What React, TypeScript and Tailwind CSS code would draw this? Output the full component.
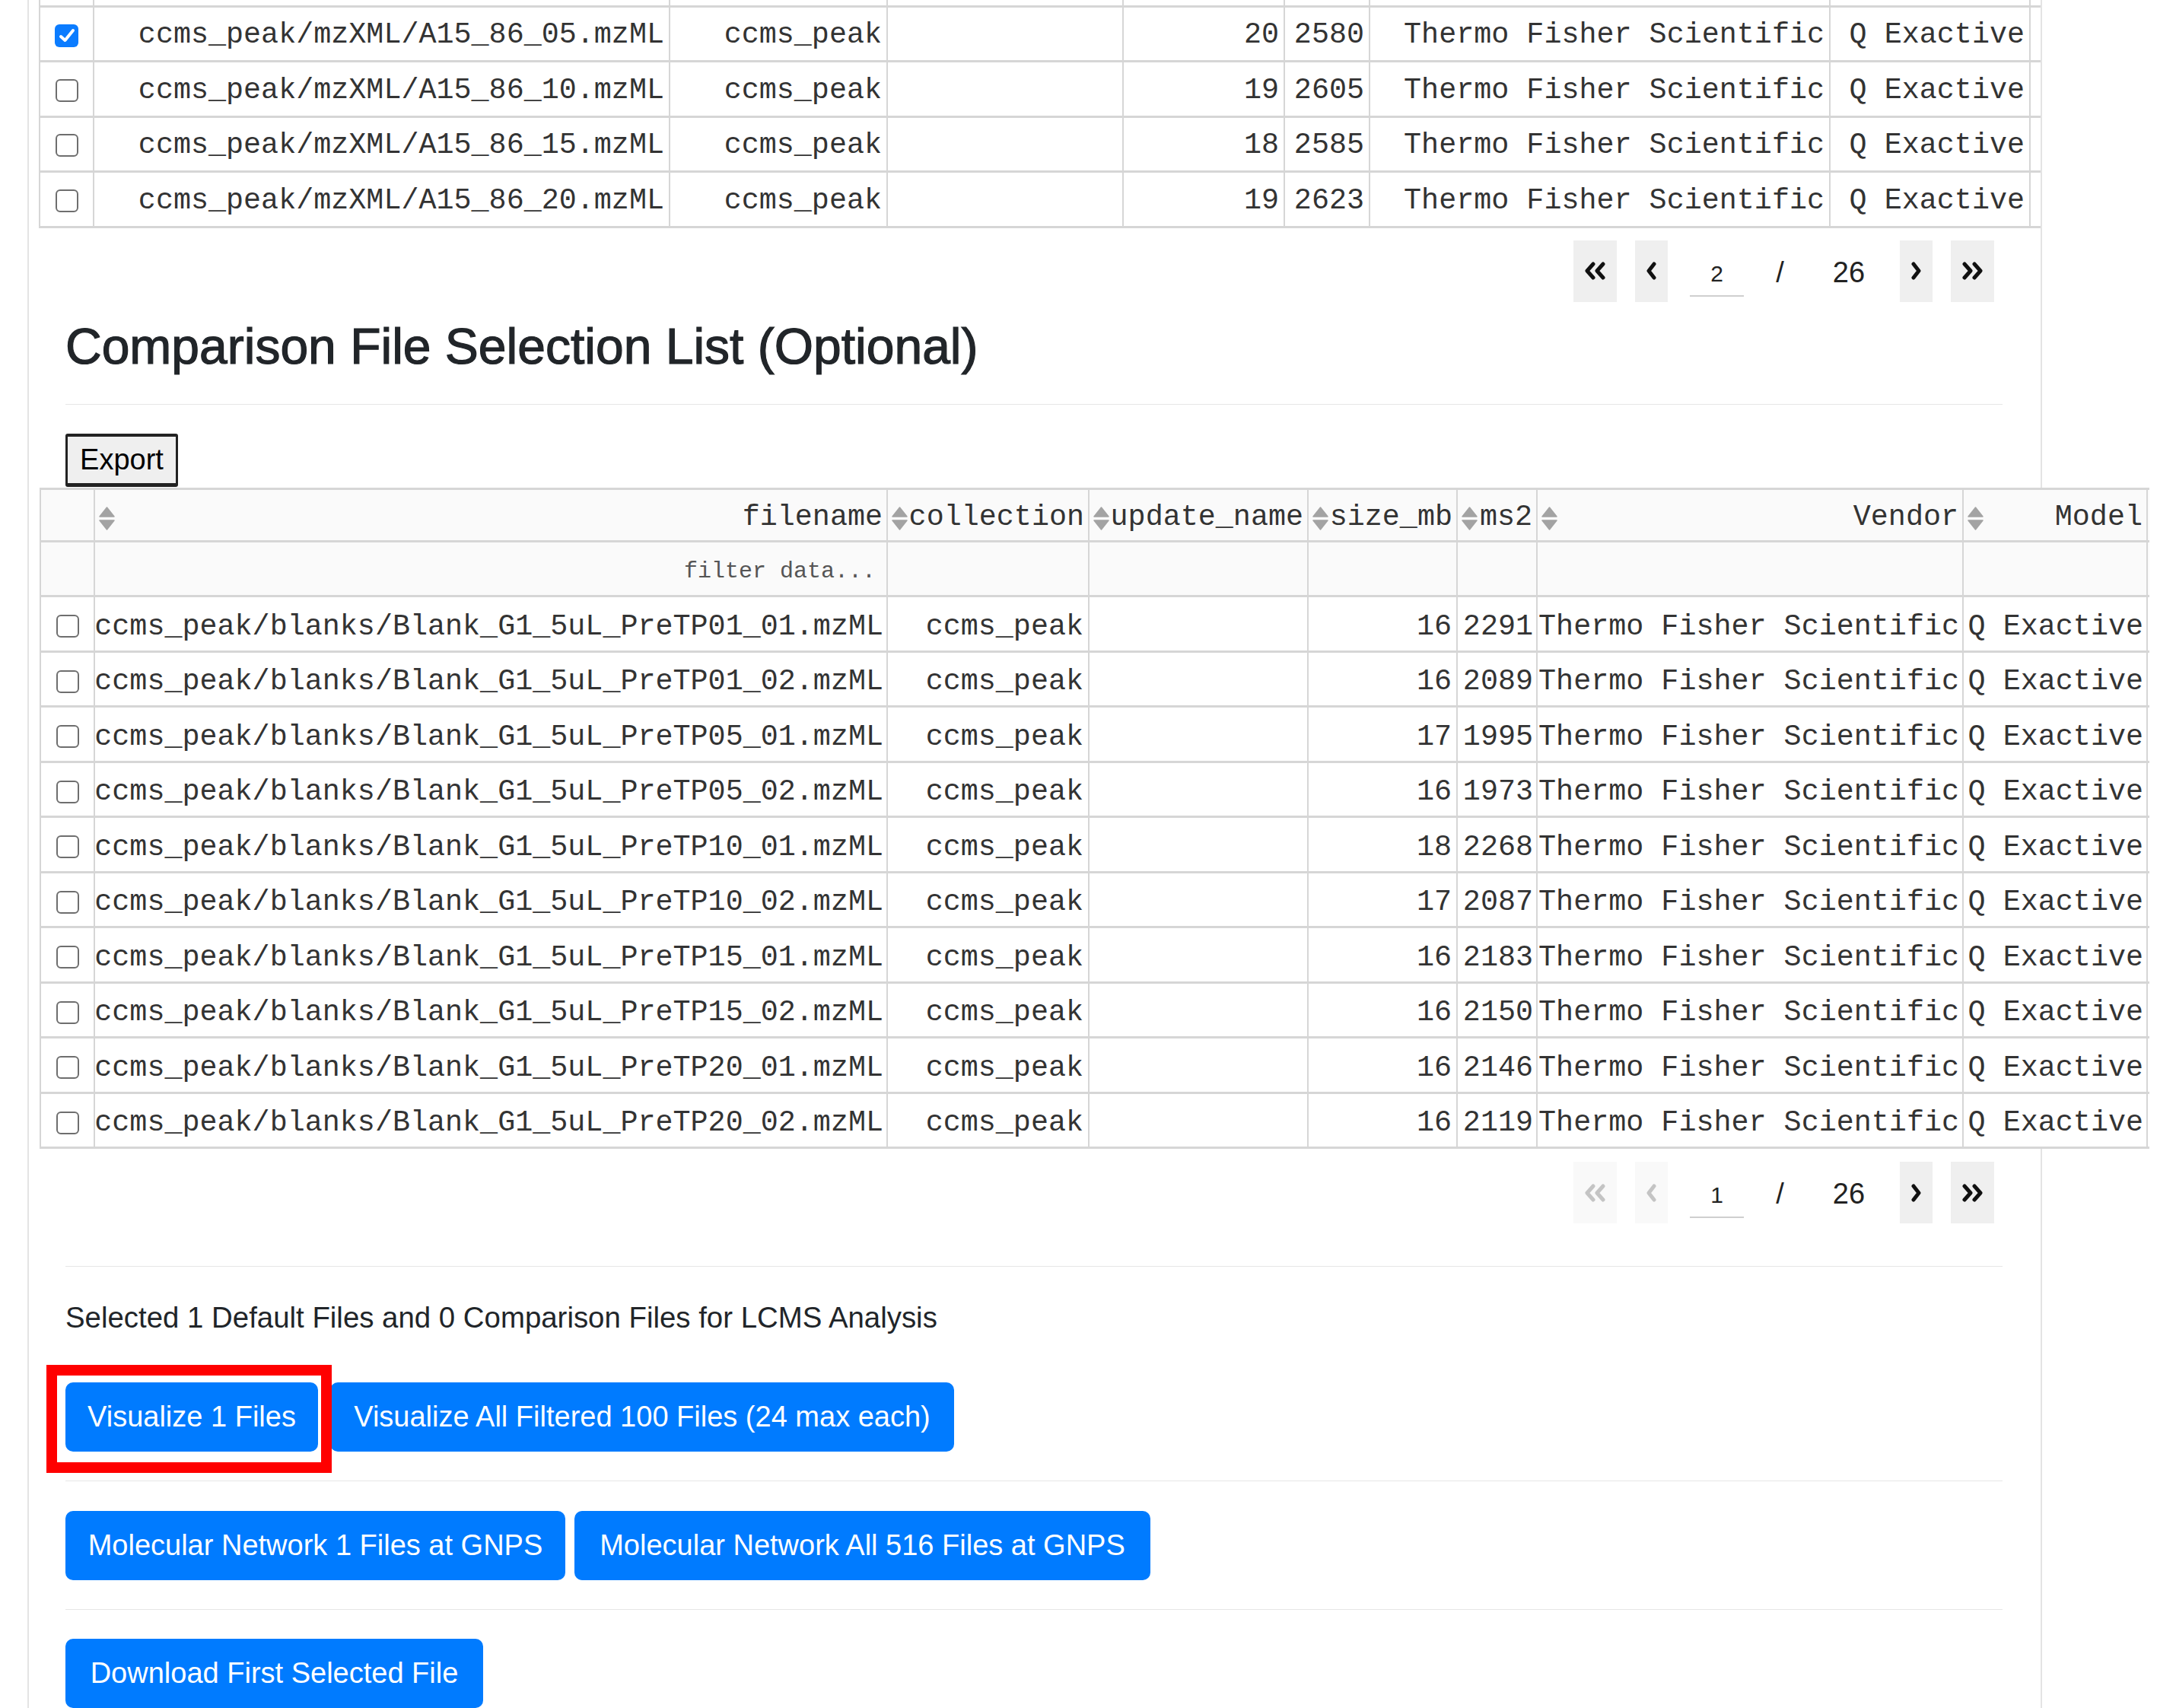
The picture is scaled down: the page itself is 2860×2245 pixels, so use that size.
import React from "react";

const MONO = "font-['Liberation_Mono',monospace]";
const SANS = "font-['Liberation_Sans',Arial,sans-serif]";

const topCols = [71, 757, 286, 310, 212, 112, 605, 263];
const botCols = [71, 1042, 265, 288, 196, 105, 560, 242];

const topRows = [
  { f: "ccms_peak/mzXML/A15_86_05.mzML", s: "20", m: "2580", c: true },
  { f: "ccms_peak/mzXML/A15_86_10.mzML", s: "19", m: "2605", c: false },
  { f: "ccms_peak/mzXML/A15_86_15.mzML", s: "18", m: "2585", c: false },
  { f: "ccms_peak/mzXML/A15_86_20.mzML", s: "19", m: "2623", c: false },
];

const botRows = [
  { f: "ccms_peak/blanks/Blank_G1_5uL_PreTP01_01.mzML", s: "16", m: "2291" },
  { f: "ccms_peak/blanks/Blank_G1_5uL_PreTP01_02.mzML", s: "16", m: "2089" },
  { f: "ccms_peak/blanks/Blank_G1_5uL_PreTP05_01.mzML", s: "17", m: "1995" },
  { f: "ccms_peak/blanks/Blank_G1_5uL_PreTP05_02.mzML", s: "16", m: "1973" },
  { f: "ccms_peak/blanks/Blank_G1_5uL_PreTP10_01.mzML", s: "18", m: "2268" },
  { f: "ccms_peak/blanks/Blank_G1_5uL_PreTP10_02.mzML", s: "17", m: "2087" },
  { f: "ccms_peak/blanks/Blank_G1_5uL_PreTP15_01.mzML", s: "16", m: "2183" },
  { f: "ccms_peak/blanks/Blank_G1_5uL_PreTP15_02.mzML", s: "16", m: "2150" },
  { f: "ccms_peak/blanks/Blank_G1_5uL_PreTP20_01.mzML", s: "16", m: "2146" },
  { f: "ccms_peak/blanks/Blank_G1_5uL_PreTP20_02.mzML", s: "16", m: "2119" },
];

function CheckBox({ checked, low }: { checked?: boolean; low?: boolean }) {
  const mt = low ? "mt-[7px]" : "mt-[4px]";
  if (checked) {
    return (
      <div className={`${mt} w-[31px] h-[30px] rounded-[6px] bg-[#0b7cff] flex items-center justify-center`}>
        <svg width="22" height="20" viewBox="0 0 22 20">
          <polyline points="3,11 8.5,16 19,3" fill="none" stroke="#fff" strokeWidth="4" strokeLinecap="round" strokeLinejoin="round" />
        </svg>
      </div>
    );
  }
  return <div className={`${mt} w-[30px] h-[30px] rounded-[6px] border-2 border-[#6e6e6e] bg-white`} />;
}

function SortIcon() {
  return (
    <svg width="23" height="31" viewBox="0 0 23 31" className="shrink-0">
      <path d="M11.5 1 L21 13 L2 13 Z" fill="#a3a3a3" stroke="#a3a3a3" strokeWidth="1.5" strokeLinejoin="round" />
      <path d="M2 18 L21 18 L11.5 30 Z" fill="#a3a3a3" stroke="#a3a3a3" strokeWidth="1.5" strokeLinejoin="round" />
    </svg>
  );
}

function Cell({ w, children, center, className = "" }: { w: number; children?: React.ReactNode; center?: boolean; className?: string }) {
  return (
    <div
      style={{ width: w }}
      className={`shrink-0 h-full border-r-2 border-[#d6d6d6] flex items-center ${center ? "justify-center" : "justify-end pr-[6px] pt-[5px]"} overflow-hidden whitespace-nowrap ${className}`}
    >
      {children}
    </div>
  );
}

function Chevron({ dir, double, color }: { dir: "l" | "r"; double?: boolean; color: string }) {
  const single = dir === "l" ? "11,3 4,12 11,21" : "4,3 11,12 4,21";
  if (!double) {
    return (
      <svg width="15" height="24" viewBox="0 0 15 24">
        <polyline points={single} fill="none" stroke={color} strokeWidth="5" strokeLinecap="round" strokeLinejoin="round" />
      </svg>
    );
  }
  const a = dir === "l" ? "13,3 5,12 13,21" : "5,3 13,12 5,21";
  const b = dir === "l" ? "26,3 18,12 26,21" : "18,3 26,12 18,21";
  return (
    <svg width="31" height="24" viewBox="0 0 31 24">
      <polyline points={a} fill="none" stroke={color} strokeWidth="5" strokeLinecap="round" strokeLinejoin="round" />
      <polyline points={b} fill="none" stroke={color} strokeWidth="5" strokeLinecap="round" strokeLinejoin="round" />
    </svg>
  );
}

function Pagination({ page, firstDisabled }: { page: string; firstDisabled?: boolean }) {
  const lBg = firstDisabled ? "bg-[#f9f9f9]" : "bg-[#efefef]";
  const lCol = firstDisabled ? "#c4c4c4" : "#111111";
  return (
    <div className="flex h-[81px] items-stretch justify-end pr-[61px]">
      <div className={`w-[57px] ${lBg} flex items-center justify-center`}>
        <Chevron dir="l" double color={lCol} />
      </div>
      <div className={`w-[43px] ml-[24px] ${lBg} flex items-center justify-center`}>
        <Chevron dir="l" color={lCol} />
      </div>
      <div className="w-[71px] ml-[29px] relative flex items-center justify-center">
        <span className={`${SANS} text-[30px] text-[#222] mt-[6px]`}>{page}</span>
        <div className="absolute left-0 right-0 bottom-[7px] h-[2px] bg-[#cfcfcf]" />
      </div>
      <div className={`w-[95px] flex items-center justify-center ${SANS} text-[38px] text-[#222] pt-[4px]`}>/</div>
      <div className={`w-[86px] flex items-center justify-center ${SANS} text-[38px] text-[#222] pt-[4px]`}>26</div>
      <div className="w-[43px] ml-[24px] bg-[#efefef] flex items-center justify-center">
        <Chevron dir="r" color="#111111" />
      </div>
      <div className="w-[57px] ml-[24px] bg-[#efefef] flex items-center justify-center">
        <Chevron dir="r" double color="#111111" />
      </div>
    </div>
  );
}

function Hr({ className = "" }: { className?: string }) {
  return <div className={`ml-[48px] mr-[50px] h-[2px] bg-[#e6e6e6] ${className}`} />;
}

function BlueButton({ w, children, className = "" }: { w: number; children: React.ReactNode; className?: string }) {
  return (
    <div
      style={{ width: w }}
      className={`h-[91px] shrink-0 rounded-[10px] bg-[#007bff] text-white ${SANS} text-[38px] flex items-center justify-center whitespace-nowrap ${className}`}
    >
      {children}
    </div>
  );
}

export default function App() {
  return (
    <div className="relative w-[2860px] h-[2245px] overflow-hidden bg-white text-[#212529]">
      <div className="flex h-full">
        <div className="w-[36px] shrink-0" />
        <div className="w-[2648px] shrink-0 h-full border-x-2 border-[#e4e4e4] flex flex-col">
          {/* top table (continuation) */}
          <div className={`ml-[13px] border-l-2 border-[#d6d6d6] ${MONO} text-[38.4px] text-[#333]`}>
            <div className="flex h-[10px] border-b-[3px] border-[#d6d6d6]">
              {topCols.map((w, i) => (
                <Cell key={i} w={w} center />
              ))}
            </div>
            {topRows.map((r, i) => (
              <div key={i} className="flex h-[72.4px] border-b-[3px] border-[#d6d6d6]">
                <Cell w={topCols[0]} center>
                  <CheckBox checked={r.c} />
                </Cell>
                <Cell w={topCols[1]}>{r.f}</Cell>
                <Cell w={topCols[2]}>ccms_peak</Cell>
                <Cell w={topCols[3]} />
                <Cell w={topCols[4]}>{r.s}</Cell>
                <Cell w={topCols[5]}>{r.m}</Cell>
                <Cell w={topCols[6]}>Thermo Fisher Scientific</Cell>
                <Cell w={topCols[7]}>Q Exactive</Cell>
              </div>
            ))}
          </div>

          <div className="mt-[16.4px]">
            <Pagination page="2" />
          </div>

          <h3 className={`mt-[18px] ml-[48px] h-[80px] leading-[80px] text-[66px] ${SANS} [-webkit-text-stroke:1.2px_#212529] whitespace-nowrap`}>
            Comparison File Selection List (Optional)
          </h3>

          <Hr className="mt-[36px]" />

          <div className="mt-[39px] ml-[48px]">
            <div className={`w-[148px] h-[70px] bg-[#efefef] border-x-[3px] border-t-[4px] border-b-[5px] border-[#222] rounded-[3px] flex items-center justify-center ${SANS} text-[38px] text-black`}>
              Export
            </div>
          </div>

          {/* comparison table */}
          <div className={`mt-[1px] ml-[14px] w-[2773px] border-l-2 border-t-[3px] border-[#d6d6d6] bg-white relative ${MONO} text-[38.4px] text-[#333]`}>
            <div className="flex h-[69px] border-b-[3px] border-[#d6d6d6] bg-[#fafafa]">
              <Cell w={botCols[0]} center />
              {["filename", "collection", "update_name", "size_mb", "ms2", "Vendor", "Model"].map((t, i) => (
                <div
                  key={i}
                  style={{ width: botCols[i + 1] }}
                  className="shrink-0 h-full border-r-2 border-[#d6d6d6] flex items-center justify-between pl-[4px] pr-[5px] pt-[8px] whitespace-nowrap overflow-hidden"
                >
                  <SortIcon />
                  <span>{t}</span>
                </div>
              ))}
            </div>
            <div className="flex h-[72px] border-b-[3px] border-[#d6d6d6] bg-[#fafafa]">
              <Cell w={botCols[0]} center />
              <div style={{ width: botCols[1] }} className="shrink-0 h-full border-r-2 border-[#d6d6d6] flex items-center justify-end pr-[14px] pt-[8px] text-[30px] text-[#555]">
                filter data...
              </div>
              {botCols.slice(2).map((w, i) => (
                <Cell key={i} w={w} center />
              ))}
            </div>
            {botRows.map((r, i) => (
              <div key={i} className="flex h-[72.5px] border-b-[3px] border-[#d6d6d6]">
                <Cell w={botCols[0]} center>
                  <CheckBox low />
                </Cell>
                <Cell w={botCols[1]} className="!pr-[4px] !pt-[9px]">{r.f}</Cell>
                <Cell w={botCols[2]} className="!pt-[9px]">ccms_peak</Cell>
                <Cell w={botCols[3]} />
                <Cell w={botCols[4]} className="!pt-[9px]">{r.s}</Cell>
                <Cell w={botCols[5]} className="!pr-[4px] !pt-[9px]">{r.m}</Cell>
                <Cell w={botCols[6]} className="!pr-[4px] !pt-[9px]">Thermo Fisher Scientific</Cell>
                <Cell w={botCols[7]} className="!pr-[4px] !pt-[9px]">Q Exactive</Cell>
              </div>
            ))}
          </div>

          <div className="mt-[17px]">
            <Pagination page="1" firstDisabled />
          </div>

          <Hr className="mt-[56px]" />

          <p className={`mt-[39px] ml-[48px] h-[57.6px] leading-[57.6px] text-[38.4px] ${SANS} whitespace-nowrap`}>
            Selected 1 Default Files and 0 Comparison Files for LCMS Analysis
          </p>

          <div className="mt-[56.4px] ml-[48px] flex">
            <BlueButton w={332}>Visualize 1 Files</BlueButton>
            <BlueButton w={820} className="ml-[16px]">Visualize All Filtered 100 Files (24 max each)</BlueButton>
          </div>

          <Hr className="mt-[38px]" />

          <div className="mt-[39px] ml-[48px] flex">
            <BlueButton w={657}>Molecular Network 1 Files at GNPS</BlueButton>
            <BlueButton w={757} className="ml-[12px]">Molecular Network All 516 Files at GNPS</BlueButton>
          </div>

          <Hr className="mt-[38px]" />

          <div className="mt-[39px] ml-[48px] flex">
            <BlueButton w={549}>Download First Selected File</BlueButton>
          </div>
        </div>
      </div>

      {/* annotation highlight */}
      <div className="absolute left-[61px] top-[1794px] w-[375px] h-[142px] border-[14px] border-[#ff0000] pointer-events-none" />
    </div>
  );
}
